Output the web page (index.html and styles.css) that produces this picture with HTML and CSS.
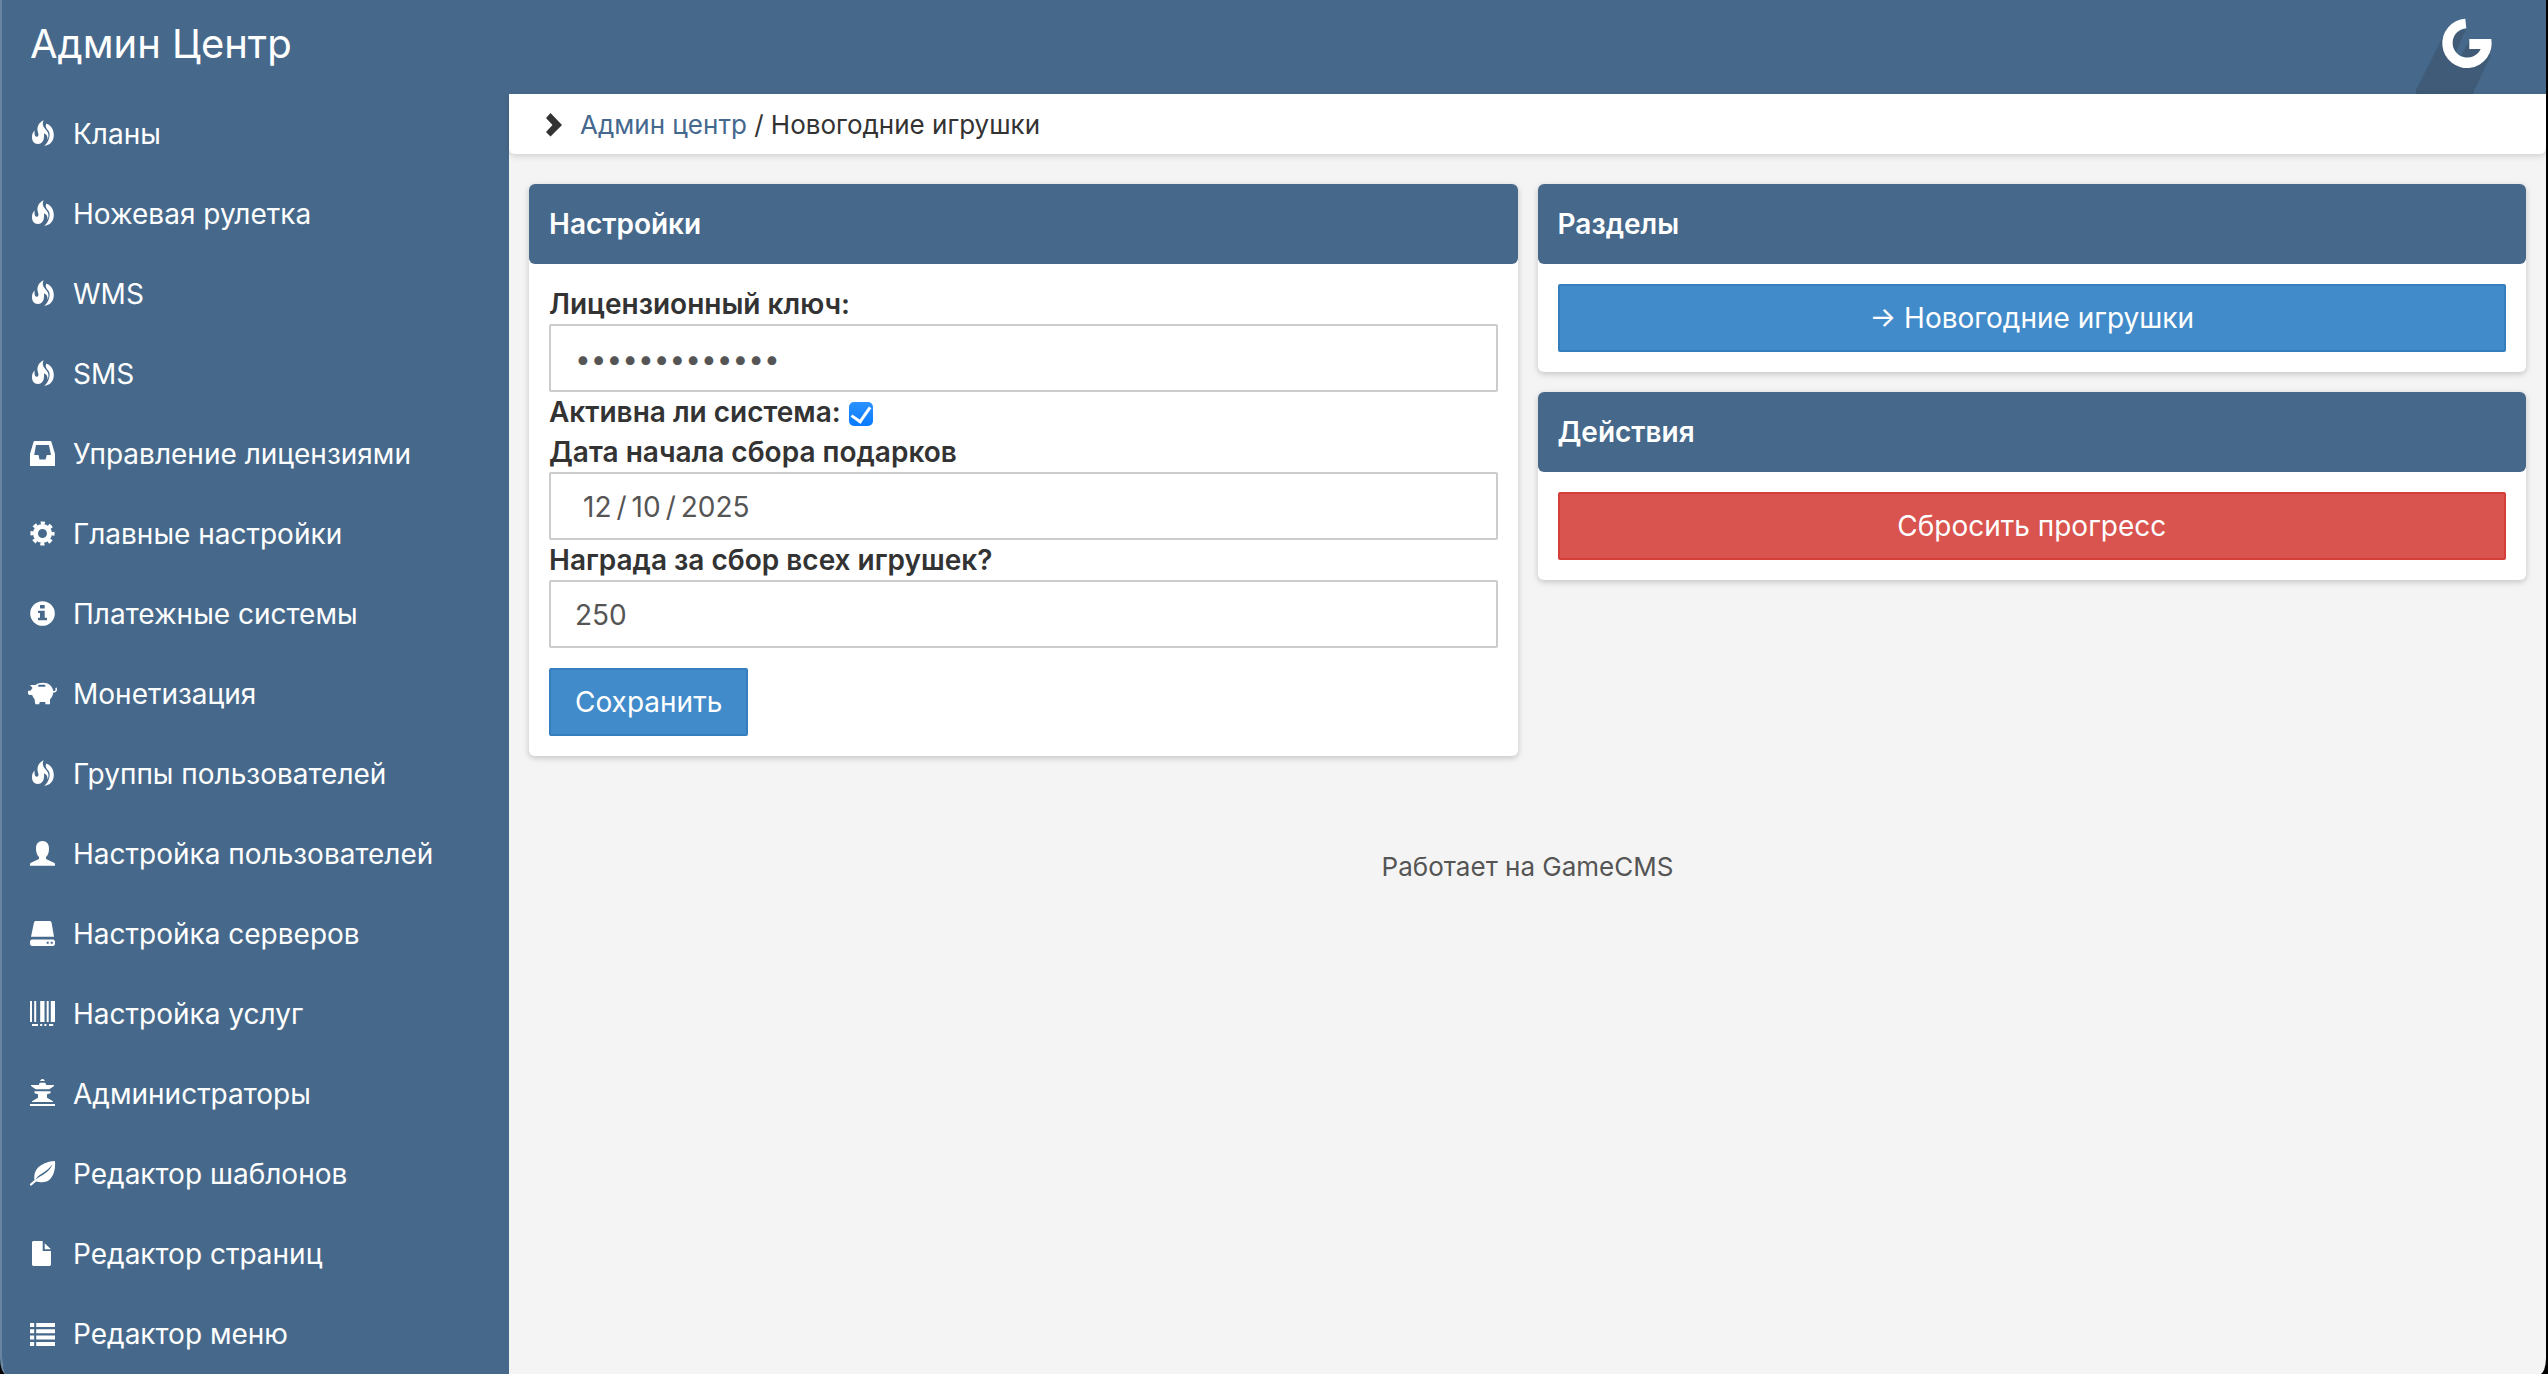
FILE: index.html
```html
<!DOCTYPE html>
<html lang="ru">
<head>
<meta charset="utf-8">
<title>Админ Центр</title>
<link rel="stylesheet" href="styles.css">
</head>
<body>
<svg class="sprite" aria-hidden="true">
  <symbol id="i-fire" viewBox="0 0 28 28"><path d="M15.700.3C13.500 4 15.500 7.500 18.500 10.500C21 13.500 21 17 19.500 19.500C19.800 15.500 18 14 16 13.500C16.500 18 15.500 24 9.800 24C6 24 4 21 4 17C4 14 5 12 6.800 10.500C6 14 7 16.500 8.500 16.700C10.500 16.800 11 15 10 12.500C8.500 8 10 3 15.700.3zM18.200 3.500C22.500 5 25.800 9 25.800 15C25.800 21 22 25.600 16 25.800C19.500 23.500 19.500 21.500 20.800 19C22.500 15 21.500 11.800 19.800 10C17.800 8 17.300 6 18.200 3.500z"/></symbol>
  <symbol id="i-inbox" viewBox="0 0 28 28"><path fill-rule="evenodd" d="M6.800 1h15.400c.6 0 1 .3 1.200.8L27 14v12H2V14L5.600 1.800C5.800 1.300 6.200 1 6.800 1zM8 5 6.200 15h4.300l1 4.500h6l1.300-4.500h4.200L20.900 5z"/></symbol>
  <symbol id="i-cog" viewBox="0 0 28 28"><g fill="none" stroke="currentColor"><circle cx="14.500" cy="13.500" r="7" stroke-width="5"/><circle cx="14.500" cy="13.500" r="10.500" stroke-width="3.200" stroke-dasharray="4.200 4.047" stroke-dashoffset="2.100"/></g></symbol>
  <symbol id="i-info" viewBox="0 0 28 28"><path fill-rule="evenodd" d="M14.500 1.200a12.300 12.300 0 1 1 0 24.600a12.300 12.300 0 1 1 0-24.600zM12 5v3.600h4.700V5zM10 10.700v2.300h2v4.800h-2v2.400h9v-2.400h-2.300v-7.100z"/></symbol>
  <symbol id="i-pig" viewBox="0 0 28 28"><path fill-rule="evenodd" d="M2 5h5.500C9.300 3.600 12 2.700 15 2.700c5.700 0 9.500 3.500 10.300 8.300.2 3.500-1.300 6.500-3.300 8.500v4.700h-4.700V22h-5.600l-.5 2.200H7.300L6.500 19C5.500 18 4.700 16.800 4.200 15H1.500L0 14v-3.300h2.500C3.200 9.500 3.800 8.700 4.500 8zM10.300 4.800v2h7v-2z"/><path fill="none" stroke="currentColor" stroke-width="1.400" d="M24.500 11.500c3 1 4.500-1 3.500-3.800"/></symbol>
  <symbol id="i-user" viewBox="0 0 28 28"><path d="M14.500 1c4 0 6.500 2.800 6.500 7.500 0 4-1 6.500-3 8.500v2l8 3.800c.7.300 1 .8 1 1.500v1.500H2v-1.500c0-.7.300-1.200 1-1.500L11 19v-2c-2-2-3-4.500-3-8.500C8 3.800 10.500 1 14.500 1z"/></symbol>
  <symbol id="i-hdd" viewBox="0 0 28 28"><path fill-rule="evenodd" d="M8 1h13.500c1 0 1.700.5 2 1.500L26 16.800H3L6 2.500C6.300 1.500 7 1 8 1zM3.500 19.500h22L27 21v3.500L25.500 26h-22L2 24.500V21zM18.700 21.700v2h2v-2zM22.700 21.700v2h2v-2z"/></symbol>
  <symbol id="i-barcode" viewBox="0 0 28 28"><path d="M2 1h2v21H2zM6.200 1h2v21h-2zM12.200 1h4.300v21h-4.300zM18.700 1h2v21h-2zM22.800 1H27v21h-4.200zM4 24h6v2H4zM12.200 24h2v2h-2zM16.400 24h2v2h-2zM21 24h4.200v2H21z"/></symbol>
  <symbol id="i-tower" viewBox="0 0 28 28"><path d="M12 1 13.200-.5C14-1.100 15-1.100 15.800-.5L17 1zM3 5h8V4l1-1.300h5L18 4v1h8v1l-4.700 3.300H7.700L3 6zM6.500 11.300h16v2l-3.500 1v3.500l6 3.500V22H4v-.7l6-3.500v-3.500l-3.500-1zM2 24h25v2H2z"/></symbol>
  <symbol id="i-leaf" viewBox="0 0 28 28"><path fill-rule="evenodd" d="M27 1c.7 8-1.500 16-6.500 19.500-4 2.700-9 1.500-12.500 1L3.500 25.500H2V24l4.500-4C5.500 14 8 8.500 12 6c4-2.700 8-4.500 15-5zM24.500 4c-3 4.500-6.500 7-10.500 9.500-3.500 2.200-5.500 4-6.500 6.300 3-2.500 6-4 9-6 4-2.500 6.500-5.500 8-9.800z"/></symbol>
  <symbol id="i-file" viewBox="0 0 28 28"><path d="M4 2 5 1h9.700v10H23v13.800L22 26H5l-1-1.200zM16.700 3.300 23 9.200h-6.300z"/></symbol>
  <symbol id="i-list" viewBox="0 0 28 28"><path d="M2 3h4.200v4H2zM8.200 3H27v4H8.200zM2 9.300h4.200v4H2zM8.200 9.300H27v4H8.200zM2 15.600h4.200v4H2zM8.200 15.600H27v4H8.200zM2 22h4.200v4H2zM8.200 22H27v4H8.200z"/></symbol>
</svg>
<div class="window">
  <header class="topbar">
    <a class="brand" href="#">Админ Центр</a>
    <a class="logo" href="#" aria-label="GameCMS">
      <svg viewBox="0 0 84 94"><path class="logo-shade" d="M26.300 38 0 90v4h56.700L75 55l-9-6H53.300v-8L44 57l-4-5 10-23z"/><path class="logo-mark" d="M49.300 18.700A24.700 24.700 0 1 0 75.300 39H53.300v10h11.400A14.700 14.700 0 1 1 50.300 28.200z"/></svg>
    </a>
  </header>
  <div class="layout">
    <nav class="menu">
      <a href="#"><svg><use href="#i-fire"/></svg>Кланы</a>
      <a href="#"><svg><use href="#i-fire"/></svg>Ножевая рулетка</a>
      <a href="#"><svg><use href="#i-fire"/></svg>WMS</a>
      <a href="#"><svg><use href="#i-fire"/></svg>SMS</a>
      <a href="#"><svg><use href="#i-inbox"/></svg>Управление лицензиями</a>
      <a href="#"><svg><use href="#i-cog"/></svg>Главные настройки</a>
      <a href="#"><svg><use href="#i-info"/></svg>Платежные системы</a>
      <a href="#"><svg><use href="#i-pig"/></svg>Монетизация</a>
      <a href="#"><svg><use href="#i-fire"/></svg>Группы пользователей</a>
      <a href="#"><svg><use href="#i-user"/></svg>Настройка пользователей</a>
      <a href="#"><svg><use href="#i-hdd"/></svg>Настройка серверов</a>
      <a href="#"><svg><use href="#i-barcode"/></svg>Настройка услуг</a>
      <a href="#"><svg><use href="#i-tower"/></svg>Администраторы</a>
      <a href="#"><svg><use href="#i-leaf"/></svg>Редактор шаблонов</a>
      <a href="#"><svg><use href="#i-file"/></svg>Редактор страниц</a>
      <a href="#"><svg><use href="#i-list"/></svg>Редактор меню</a>
    </nav>
    <main class="content">
      <div class="crumbs">
        <svg viewBox="0 0 16 24"><path d="M4.500 0 16 12 4.500 23.500 0 19l6.500-7L0 5z"/></svg>
        <span><a href="#">Админ центр</a> / Новогодние игрушки</span>
      </div>
      <div class="columns">
        <section class="card">
          <h2>Настройки</h2>
          <form class="card-body">
            <label for="key">Лицензионный ключ:</label>
            <input class="field" id="key" type="password" value="1234567890123">
            <div class="check-row">
              <label for="active">Активна ли система:</label>
              <input class="check" id="active" type="checkbox" checked>
            </div>
            <label for="start">Дата начала сбора подарков</label>
            <input class="field" id="start" type="date" value="2025-12-10">
            <label for="reward">Награда за сбор всех игрушек?</label>
            <input class="field" id="reward" type="text" value="250">
            <button class="btn btn-save" type="button">Сохранить</button>
          </form>
        </section>
        <div class="stack">
          <section class="card">
            <h2>Разделы</h2>
            <div class="card-body"><a class="btn" href="#">→ Новогодние игрушки</a></div>
          </section>
          <section class="card">
            <h2>Действия</h2>
            <div class="card-body"><button class="btn btn-danger" type="button">Сбросить прогресс</button></div>
          </section>
        </div>
      </div>
      <footer class="footer">Работает на GameCMS</footer>
    </main>
  </div>
</div>
</body>
</html>
```
FILE: styles.css
```css
:root {
  --blue: #46698b;
  --page: #f4f4f4;
}

* { box-sizing: border-box; }

body {
  margin: 0;
  background: #000;
  color: #333;
  font: 28px/40px Inter, "Liberation Sans", sans-serif;
}

a { color: inherit; text-decoration: none; }

.sprite { position: absolute; width: 0; height: 0; }
symbol { overflow: visible; }

.window {
  display: flex;
  flex-direction: column;
  min-height: 100vh;
  margin-right: 2px;
  border-left: 2px solid #6886a3;
  border-radius: 0 0 6px 6px / 0 0 16px 16px;
  background: var(--page);
  overflow: hidden;
}

.topbar {
  display: flex;
  justify-content: space-between;
  height: 94px;
  padding: 0 46px 0 28px;
  background: var(--blue);
  color: #fff;
}

.brand { font-size: 40px; line-height: 88px; }

.logo svg { display: block; width: 84px; height: 94px; }
.logo-shade { fill: #3f5b77; }
.logo-mark { fill: #fff; }

.layout { display: flex; flex: 1; }

.menu { flex: 0 0 507px; background: var(--blue); }

.menu a {
  display: flex;
  align-items: center;
  gap: 17px;
  height: 80px;
  padding-left: 26px;
  color: #fff;
}

.menu svg { width: 28px; height: 28px; fill: currentColor; overflow: visible; }

.content { flex: 1; min-width: 0; }

.crumbs {
  display: flex;
  align-items: center;
  gap: 18px;
  height: 60px;
  padding: 2px 37px 0;
  border-radius: 0 0 6px 6px;
  background: #fff;
  box-shadow: 0 2px 6px rgba(0, 0, 0, .15);
  font-size: 26px;
}

.crumbs svg { width: 16px; height: 24px; fill: #333; }
.crumbs a { color: #45688e; }

.columns {
  display: grid;
  grid-template-columns: 1fr 1fr;
  align-items: start;
  gap: 20px;
  padding: 30px 20px 0;
}

.stack { display: grid; gap: 20px; }

.card {
  border-radius: 6px;
  background: #fff;
  box-shadow: 0 2px 6px rgba(0, 0, 0, .2);
}

.card h2 {
  margin: 0;
  padding: 20px;
  border-radius: 6px;
  background: var(--blue);
  color: #fff;
  font-size: 28px;
  font-weight: 600;
  line-height: 40px;
}

.card-body { padding: 20px; }

label { display: block; font-weight: 600; }

.check-row { display: flex; align-items: center; gap: 8px; }

.check {
  display: grid;
  place-items: center;
  width: 24px;
  height: 24px;
  margin: 4px 0 0;
  border-radius: 5px;
  background: linear-gradient(#2b92ff, #0a7aff);
  appearance: none;
}

.check::before {
  content: "";
  width: 9px;
  height: 16px;
  margin-bottom: 4px;
  border: solid #fff;
  border-width: 0 3px 3px 0;
  transform: rotate(35deg);
}

.field {
  display: block;
  width: 100%;
  height: 68px;
  padding: 2px 24px 0;
  border: 2px solid #ccc;
  border-radius: 2px;
  background: #fff;
  color: #555;
  font: inherit;
}

.field::-webkit-calendar-picker-indicator { display: none; }
.field::-webkit-datetime-edit { padding: 0 3px; }
.field::-webkit-datetime-edit-month-field,
.field::-webkit-datetime-edit-day-field,
.field::-webkit-datetime-edit-year-field { padding: 0 5px; }

.btn {
  display: block;
  width: 100%;
  height: 68px;
  padding: 0 24px;
  border: 2px solid #357ebd;
  border-radius: 2px;
  background: #428bca;
  color: #fff;
  font: inherit;
  line-height: 64px;
  text-align: center;
}

.btn-save { width: auto; margin-top: 20px; }
.btn-danger { border-color: #d43f3a; background: #d9534f; }

.footer {
  padding: 91px 20px 20px;
  color: #555;
  font-size: 26px;
  text-align: center;
}
```
